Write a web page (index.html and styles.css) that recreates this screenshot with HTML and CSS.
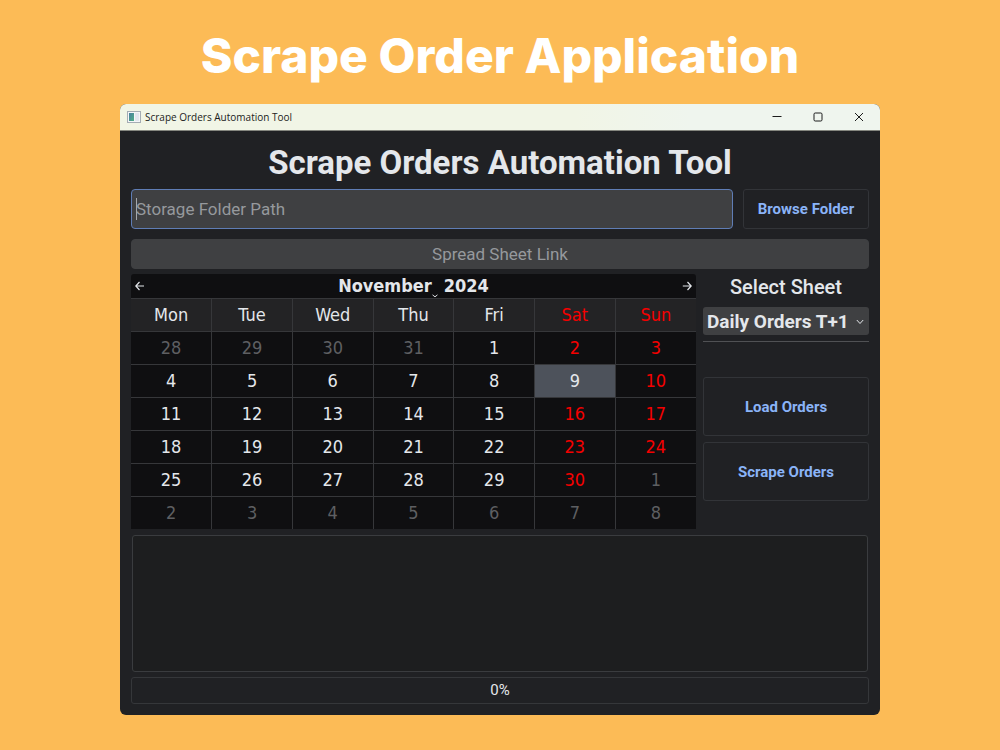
FILE: index.html
```html
<!DOCTYPE html>
<html lang="en">
<head>
<meta charset="utf-8">
<meta name="viewport" content="width=device-width, initial-scale=1">
<title>Scrape Order Application</title>
<link rel="stylesheet" href="styles.css">
</head>
<body>
<h1 class="page-title">Scrape Order Application</h1>
<main class="window">
  <header class="titlebar">
    <svg class="app-icon" width="14" height="12" viewBox="0 0 14 12" aria-hidden="true">
      <defs><linearGradient id="pane" x1="0" y1="0" x2="1" y2="1"><stop offset="0" stop-color="#4a7fa0"/><stop offset="1" stop-color="#4fae86"/></linearGradient></defs>
      <rect x="0.5" y="0.5" width="13" height="11" fill="#f4f6f8" stroke="#a4acb4"/>
      <rect x="2" y="2" width="5" height="8" fill="url(#pane)"/>
      <rect x="8" y="2" width="4" height="8" fill="#e2e6ee"/>
    </svg>
    <span class="titlebar-text">Scrape Orders Automation Tool</span>
    <div class="window-controls">
      <button class="control" type="button" aria-label="Minimize"><svg width="10" height="10" viewBox="0 0 10 10"><path d="M.5 4.500h9"/></svg></button>
      <button class="control" type="button" aria-label="Maximize"><svg width="10" height="10" viewBox="0 0 10 10"><rect x="1" y="1" width="8" height="8" rx="1.200"/></svg></button>
      <button class="control" type="button" aria-label="Close"><svg width="10" height="10" viewBox="0 0 10 10"><path d="M1 1l8 8M9 1l-8 8"/></svg></button>
    </div>
  </header>
  <div class="content">
    <h2 class="heading">Scrape Orders Automation Tool</h2>
    <div class="folder-row">
      <div class="path-field">
        <input class="field path-input" type="text" placeholder="Storage Folder Path" aria-label="Storage Folder Path">
        <span class="caret"></span>
      </div>
      <button class="btn" type="button">Browse Folder</button>
    </div>
    <input class="field link-input" type="text" placeholder="Spread Sheet Link" aria-label="Spread Sheet Link">
    <div class="middle">
      <section class="calendar" aria-label="Calendar">
        <div class="cal-nav">
          <button class="nav-btn" type="button" aria-label="Previous month"><svg width="10" height="10" viewBox="0 0 10 10"><path d="M9 5H.8M4.500 1L.8 5l3.700 4"/></svg></button>
          <div class="cal-label">
            <button class="month-btn" type="button">November<svg class="month-chevron" width="6" height="4" viewBox="0 0 6 4" aria-hidden="true"><path d="M.7.7Q3 4.500 5.300.7"/></svg></button>
            <button class="month-btn" type="button">2024</button>
          </div>
          <button class="nav-btn" type="button" aria-label="Next month"><svg width="10" height="10" viewBox="0 0 10 10"><path d="M.8 5H9M5.500 1l3.700 4-3.700 4"/></svg></button>
        </div>
        <table class="cal-table">
          <thead><tr><th>Mon</th><th>Tue</th><th>Wed</th><th>Thu</th><th>Fri</th><th class="red">Sat</th><th class="red">Sun</th></tr></thead>
          <tbody>
            <tr><td class="dim">28</td><td class="dim">29</td><td class="dim">30</td><td class="dim">31</td><td>1</td><td class="red">2</td><td class="red">3</td></tr>
            <tr><td>4</td><td>5</td><td>6</td><td>7</td><td>8</td><td class="selected">9</td><td class="red">10</td></tr>
            <tr><td>11</td><td>12</td><td>13</td><td>14</td><td>15</td><td class="red">16</td><td class="red">17</td></tr>
            <tr><td>18</td><td>19</td><td>20</td><td>21</td><td>22</td><td class="red">23</td><td class="red">24</td></tr>
            <tr><td>25</td><td>26</td><td>27</td><td>28</td><td>29</td><td class="red">30</td><td class="dim">1</td></tr>
            <tr><td class="dim">2</td><td class="dim">3</td><td class="dim">4</td><td class="dim">5</td><td class="dim">6</td><td class="dim">7</td><td class="dim">8</td></tr>
          </tbody>
        </table>
      </section>
      <aside class="side">
        <label class="side-label" for="sheet">Select Sheet</label>
        <div class="select-wrap">
          <select class="sheet-select" id="sheet"><option>Daily Orders T+1</option></select>
          <svg class="select-chevron" width="8" height="6" viewBox="0 0 8 6" aria-hidden="true"><path d="M.8 1L4 4.500 7.200 1"/></svg>
        </div>
        <hr class="rule">
        <div class="actions">
          <button class="btn btn-tall" type="button">Load Orders</button>
          <button class="btn btn-tall" type="button">Scrape Orders</button>
        </div>
      </aside>
    </div>
    <textarea class="log" readonly aria-label="Log"></textarea>
    <div class="progress" role="progressbar" aria-label="Progress" aria-valuemin="0" aria-valuemax="100" aria-valuenow="0">0%</div>
  </div>
</main>
</body>
</html>
```
FILE: styles.css
```css
* { box-sizing: border-box; }

body {
  margin: 0;
  min-height: 100vh;
  padding: 20px 12% 35px;
  background: #fcbb56;
  font-family: Roboto, sans-serif;
  color: #e4e7eb;
}

button, input, select, textarea { font: inherit; color: inherit; }
button { cursor: pointer; }
svg { fill: none; stroke: currentColor; }

.page-title {
  margin: 0 0 12px;
  font: 800 48px/72px Inter, sans-serif;
  color: #fff;
  text-align: center;
  white-space: nowrap;
}

.window {
  overflow: hidden;
  border-radius: 6px;
  background: #202124;
}

.titlebar {
  display: flex;
  align-items: center;
  gap: 4px;
  height: 27px;
  padding: 0 1px 0 7px;
  border-bottom: 1px solid #85877f;
  background: linear-gradient(90deg, #f1f5e6, #f1f5e6 60%, #eff5ee 75%);
  color: #1c1c1c;
}

.titlebar-text { font: 10px/16px "Open Sans", sans-serif; }
.app-icon { stroke: none; }
.window-controls { display: flex; margin-left: auto; }

.control {
  display: flex;
  align-items: center;
  justify-content: center;
  width: 41px;
  height: 26px;
  padding: 0;
  border: 0;
  background: none;
}

.content {
  display: flex;
  flex-direction: column;
  padding: 12px 11px 11px;
}

.heading {
  margin: 0 0 6px;
  font: 700 33px/40px Roboto, sans-serif;
  text-align: center;
}

.folder-row {
  display: flex;
  gap: 10px;
  height: 40px;
  margin-bottom: 10px;
}

.path-field { position: relative; flex: 1; }

.field {
  width: 100%;
  border: 1px solid #3f4042;
  border-radius: 4px;
  background: #3f4042;
  font-size: 17px;
  outline: none;
}

.field::placeholder { color: #96999d; opacity: 1; }
.path-input { height: 40px; padding: 0 4px; border-color: #5f7db5; }
.link-input { height: 30px; margin-bottom: 5px; text-align: center; }

.caret {
  position: absolute;
  top: 9px;
  left: 5px;
  width: 1px;
  height: 22px;
  background: #a5a8ac;
}

.btn {
  width: 126px;
  padding: 0;
  border: 1px solid #323438;
  border-radius: 3px;
  background: none;
  color: #8ab4f8;
  font-size: 15px;
  font-weight: 700;
}

.middle { display: flex; gap: 7px; margin-bottom: 6px; }
.calendar { flex: 1; background: #0f0f11; border-radius: 3px 3px 0 0; }

.cal-nav {
  display: flex;
  align-items: center;
  justify-content: space-between;
  height: 24px;
}

.nav-btn {
  display: flex;
  padding: 4px;
  border: 0;
  background: none;
  stroke-width: 1.2;
}

.cal-label { display: flex; gap: 12px; }

.month-btn {
  position: relative;
  padding: 0;
  border: 0;
  background: none;
  font: 700 18px/24px "DejaVu Sans Condensed", "DejaVu Sans", sans-serif;
}

.month-chevron { position: absolute; right: -6px; bottom: 0; }

.cal-table {
  width: 100%;
  border-collapse: collapse;
  table-layout: fixed;
  font: 18px/24px "DejaVu Sans Condensed", "DejaVu Sans", sans-serif;
}

.cal-table th, .cal-table td {
  height: 33px;
  padding: 0;
  border: 1px solid #36373a;
  font-weight: 400;
  text-align: center;
}

.cal-table th { background: #232325; }
.cal-table tr > :first-child { border-left: 0; }
.cal-table tr > :last-child { border-right: 0; }
.cal-table tbody tr:last-child td { height: 32px; border-bottom: 0; }
.cal-table .red { color: #f50000; }
.cal-table .dim { color: #5e5f62; }
.cal-table .selected { background: #4d525b; }

.side { display: flex; flex-direction: column; width: 166px; }

.side-label {
  margin-bottom: 7px;
  font: 500 20px/26px Roboto, sans-serif;
  text-align: center;
}

.select-wrap { position: relative; }

.sheet-select {
  display: block;
  width: 100%;
  height: 28px;
  padding: 0 16px 0 4px;
  border: 0;
  border-radius: 3px;
  background: #3f4042;
  font-size: 19px;
  font-weight: 700;
  appearance: none;
}

.select-chevron { position: absolute; top: 12px; right: 5px; pointer-events: none; }

.rule {
  width: 100%;
  margin: 6px 0 35px;
  border: 0;
  border-top: 1px solid #505154;
}

.actions { display: flex; flex-direction: column; gap: 6px; }
.btn-tall { width: 100%; height: 59px; }

.log {
  display: block;
  height: 137px;
  margin: 0 1px 5px;
  padding: 4px;
  border: 1px solid #3a3c3f;
  border-radius: 3px;
  background: #1d1e1f;
  resize: none;
  outline: none;
}

.progress {
  border: 1px solid #35373a;
  border-radius: 3px;
  font-size: 15px;
  line-height: 25px;
  text-align: center;
}
```
